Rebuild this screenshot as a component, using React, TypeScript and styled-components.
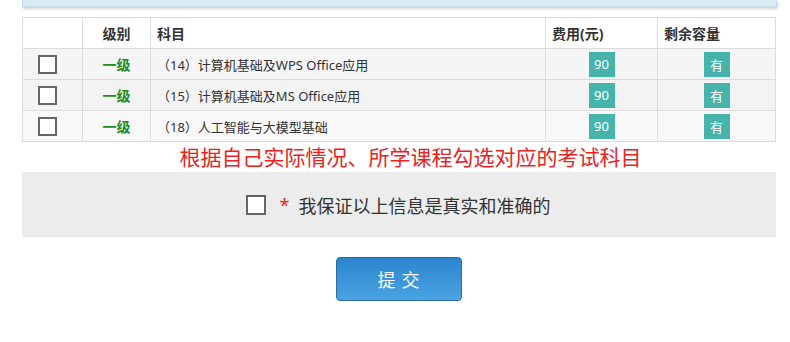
import React from "react";
import styled, { createGlobalStyle } from "styled-components";

const GlobalStyle = createGlobalStyle`
  html, body {
    margin: 0;
    padding: 0;
    background: #fff;
    font-family: "Noto Sans", "Noto Sans CJK SC", sans-serif;
    color: #333;
  }
`;

const Page = styled.div`
  width: 790px;
  height: 342px;
  overflow: hidden;
  padding: 0 15px 0 22px;
  box-sizing: border-box;
`;

const TopPanel = styled.div`
  height: 6px;
  width: 753px;
  background: #d7ebf5;
  border: 1px solid #c3dce9;
  border-top: none;
  box-shadow: 1px 2px 3px rgba(0, 0, 0, 0.18);
  margin-bottom: 10px;
`;

const Table = styled.table`
  width: 753px;
  border-collapse: collapse;
  font-size: 13px;
  table-layout: fixed;
`;

const HeadCell = styled.th<{ $align?: string }>`
  height: 30px;
  border: 1px solid #dcdcdc;
  background: #fff;
  font-weight: bold;
  font-size: 14px;
  text-align: ${(p) => p.$align || "left"};
  padding: 0 6px;
  color: #333;
`;

const Row = styled.tr<{ $bg: string }>`
  background: ${(p) => p.$bg};
`;

const Cell = styled.td<{ $align?: string }>`
  height: 30px;
  border: 1px solid #dcdcdc;
  text-align: ${(p) => p.$align || "left"};
  padding: 0 6px;
  vertical-align: middle;
`;

const CheckCell = styled.td`
  height: 30px;
  border: 1px solid #dcdcdc;
  padding: 0 0 0 15px;
  vertical-align: middle;
`;

const Box = styled.span<{ $size: number }>`
  display: inline-block;
  width: ${(p) => p.$size}px;
  height: ${(p) => p.$size}px;
  border: 2px solid #666;
  box-sizing: border-box;
  background: #fff;
  vertical-align: middle;
`;

const Level = styled.span`
  color: #1e8a1e;
  font-weight: bold;
  font-size: 14px;
`;

const Subject = styled.span`
  color: #333;
`;

const Badge = styled.span`
  display: inline-flex;
  align-items: center;
  justify-content: center;
  width: 26px;
  height: 25px;
  background: #46b4aa;
  color: #fff;
  font-size: 13px;
`;

const Notice = styled.div`
  color: #e8231f;
  font-size: 21px;
  line-height: 30px;
  text-align: center;
  padding-left: 24px;
  width: 753px;
  box-sizing: border-box;
`;

const Confirm = styled.div`
  width: 754px;
  height: 65px;
  background: #ececec;
  display: flex;
  align-items: center;
  justify-content: center;
  font-size: 18px;
  color: #333;
  padding-right: 2px;
  box-sizing: border-box;
`;

const Star = styled.span`
  color: #e8231f;
  margin: 0 9px 0 14px;
`;

const ButtonRow = styled.div`
  display: flex;
  justify-content: center;
  padding-top: 20px;
  width: 753px;
`;

const Submit = styled.button`
  width: 126px;
  height: 44px;
  border: 1px solid #2b6ea6;
  border-radius: 4px;
  background: linear-gradient(#2c86cf, #4aa3e1);
  color: #fff;
  font-size: 18px;
  letter-spacing: 6px;
  text-indent: 6px;
  font-family: "Noto Sans CJK SC", sans-serif;
  cursor: pointer;
`;

const rows = [
  { subject: "（14）计算机基础及WPS Office应用", bg: "#f5f5f5" },
  { subject: "（15）计算机基础及MS Office应用", bg: "#f3f3f3" },
  { subject: "（18）人工智能与大模型基础", bg: "#f8f8f8" },
];

export default function App() {
  return (
    <Page>
      <GlobalStyle />
      <TopPanel />
      <Table>
        <colgroup>
          <col style={{ width: 60 }} />
          <col style={{ width: 68 }} />
          <col style={{ width: 395 }} />
          <col style={{ width: 112 }} />
          <col style={{ width: 118 }} />
        </colgroup>
        <thead>
          <tr>
            <HeadCell />
            <HeadCell $align="center">级别</HeadCell>
            <HeadCell>科目</HeadCell>
            <HeadCell>费用(元)</HeadCell>
            <HeadCell>剩余容量</HeadCell>
          </tr>
        </thead>
        <tbody>
          {rows.map((r) => (
            <Row key={r.subject} $bg={r.bg}>
              <CheckCell>
                <Box $size={19} />
              </CheckCell>
              <Cell $align="center">
                <Level>一级</Level>
              </Cell>
              <Cell>
                <Subject>{r.subject}</Subject>
              </Cell>
              <Cell $align="center">
                <Badge>90</Badge>
              </Cell>
              <Cell $align="center">
                <Badge>有</Badge>
              </Cell>
            </Row>
          ))}
        </tbody>
      </Table>
      <Notice>根据自己实际情况、所学课程勾选对应的考试科目</Notice>
      <Confirm>
        <Box $size={20} />
        <Star>*</Star>
        我保证以上信息是真实和准确的
      </Confirm>
      <ButtonRow>
        <Submit>提交</Submit>
      </ButtonRow>
    </Page>
  );
}
